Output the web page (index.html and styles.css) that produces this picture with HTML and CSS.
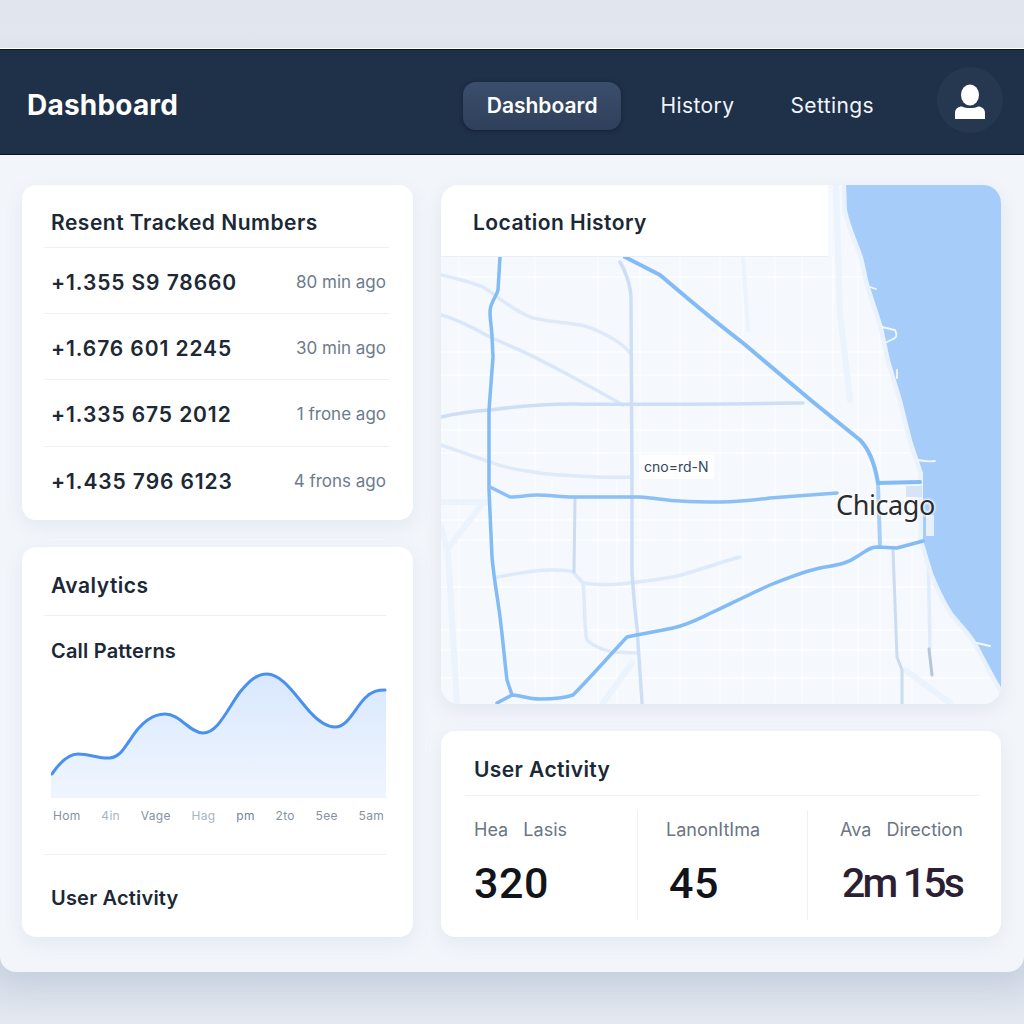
FILE: index.html
```html
<!DOCTYPE html>
<html lang="en">
<head>
    <meta charset="UTF-8">
    <meta name="viewport" content="width=device-width, initial-scale=1.0">
    <title>Dashboard</title>
    <link rel="stylesheet" href="styles.css">
</head>
<body>
    <div class="page">
        <header class="topbar">
            <div class="brand">Dashboard</div>
            <nav class="nav">
                <a class="nav-item active">Dashboard</a>
                <a class="nav-item">History</a>
                <a class="nav-item">Settings</a>
            </nav>
            <div class="avatar">
                <svg width="32" height="36" viewBox="0 0 32 36">
                    <ellipse cx="16" cy="11" rx="9" ry="10.5" fill="#fff"/>
                    <path d="M1 35v-6c0-4 3-6.500 7-6.500 2 1 5 1.500 8 1.500s6-.5 8-1.500c4 0 7 2.500 7 6.500v6z" fill="#fff"/>
                </svg>
            </div>
        </header>

        <main class="content">
            <div class="col-left">
                <section class="card numbers">
                    <h2 class="card-title">Resent Tracked Numbers</h2>
                    <div class="num-row"><span class="num">+1.355 S9 78660</span><span class="when">80 min ago</span></div>
                    <div class="num-row"><span class="num">+1.676 601 2245</span><span class="when">30 min ago</span></div>
                    <div class="num-row"><span class="num">+1.335 675 2012</span><span class="when">1 frone ago</span></div>
                    <div class="num-row"><span class="num">+1.435 796 6123</span><span class="when">4 frons ago</span></div>
                </section>

                <section class="card analytics">
                    <h2 class="card-title">Avalytics</h2>
                    <h3 class="sub-title">Call Patterns</h3>
                    <svg class="chart" width="336" height="132" viewBox="51 670 336 132">
                        <defs>
                            <linearGradient id="areaFill" x1="0" y1="0" x2="0" y2="1">
                                <stop offset="0" stop-color="#d9e8fe"/>
                                <stop offset="1" stop-color="#eff5fe"/>
                            </linearGradient>
                        </defs>
                        <path fill="url(#areaFill)" d="M51 774C60 762 68 754 78 754C90 754 100 759 110 758C120 757 124 748 130 740C140 724 152 714 165 714C180 714 190 733 203 733C218 733 228 708 240 692C250 680 257 674 267 674C282 674 295 695 310 712C320 723 327 727 335 727C348 727 355 708 365 698C372 691 378 690 386 690V798H51z"/>
                        <path fill="none" stroke="#4a90ee" stroke-width="3" stroke-linecap="round" d="M52 774C60 762 68 754 78 754C90 754 100 759 110 758C120 757 124 748 130 740C140 724 152 714 165 714C180 714 190 733 203 733C218 733 228 708 240 692C250 680 257 674 267 674C282 674 295 695 310 712C320 723 327 727 335 727C348 727 355 708 365 698C372 691 378 690 385 690"/>
                    </svg>
                    <div class="axis">
                        <span>Hom</span><span class="faint">4in</span><span>Vage</span><span class="faint">Hag</span><span class="dark">pm</span><span>2to</span><span>5ee</span><span>5am</span>
                    </div>
                    <div class="analytics-foot">User Activity</div>
                </section>
            </div>

            <div class="col-right">
                <section class="map-card">
                    <svg class="map" width="560" height="519" viewBox="441 185 560 519">
                        <rect x="441" y="185" width="560" height="519" fill="#f5f8fd"/>
                        <!-- street grid -->
                        <path fill="none" stroke="#fff" stroke-width="1.300" opacity="0.7" d="M459 257V703M535 257V703M552 480V703M598 257V703M617 480V703M640 257V703M680 257V703M720 257V703M743 257V703M775 257V703M802 257V703M833 257V703M858 257V703M880 257V703M912 540V703M441 277H870M441 352H890M441 375H895M441 430H905M441 453H910M441 520H920M441 540H925M441 587H935M441 630H965M441 650H975M441 678H995"/>
                        <!-- faint roads -->
                        <g fill="none" stroke-linecap="round" stroke-linejoin="round">
                            <path stroke="#ebf3fd" stroke-width="6" d="M836 185L840 313L850 400M905 670L950 703M632 663L603 703M441 502H487M483 503L448 548M441 527L448 553L457 703"/>
                            <path stroke="#ebf3fd" stroke-width="4" d="M743 257L748 330"/>
                            <path stroke="#deeafa" stroke-width="3.500" d="M441 275C460 279 470 282 483 287C500 298 515 312 533 318C550 322 565 322 580 325C595 328 620 340 630 353M441 445L490 462C505 468 520 470 533 472C550 475 600 478 632 477M497 577C515 574 535 570 550 570C560 570 570 570 573 572L583 583C595 585 610 585 620 584C640 582 655 580 673 577C695 572 720 562 740 557M583 583C585 600 584 630 587 640C595 648 605 650 613 652L638 653"/>
                            <path stroke="#d9e7f9" stroke-width="3.500" d="M441 315C460 320 475 329 490 337C505 344 522 350 540 360C570 375 600 392 623 405"/>
                            <path stroke="#cddff6" stroke-width="3.500" d="M441 417C458 413 475 411 490 410C520 406 550 404 573 404C640 405 720 404 803 403M620 262C625 270 631 285 631 300C632 360 632 480 632 573C634 600 636 620 637 627L642 703"/>
                            <path stroke="#ccdcf0" stroke-width="3" d="M575 497L574 572M893 550L897 657L902 670V703"/>
                            <path stroke="#dfecfb" stroke-width="3.500" d="M928 547L930 648"/>
                            <path stroke="#b3c6dc" stroke-width="3" d="M929 649L932 675"/>
                        </g>
                        <!-- lake -->
                        <path fill="#a6cdf9" stroke="#e9f2fd" stroke-width="9" paint-order="stroke" stroke-linejoin="round" d="M846 181L847 210C851 228 858 242 863 257C866 268 867 278 870 287L883 327L890 360L902 400L912 440L923 473V540L933 573C940 590 946 602 953 613C962 624 970 632 977 643C985 658 992 672 1004 692V181z"/>
                        <path fill="none" stroke="#f4f8fe" stroke-width="1.800" stroke-linecap="round" d="M882 327L895 330C897 334 897 336 895 338L887 342M897 370V378M918 460C923 461 930 462 935 461M977 643L990 646M870 287L876 289"/>
                        <!-- main roads -->
                        <g fill="none" stroke-linecap="round" stroke-linejoin="round">
                            <path stroke="#a9cff6" stroke-width="4" d="M878 484L880 545"/>
                            <path stroke="#82bbf6" stroke-width="3.500" d="M500 257L498 290C496 298 490 302 490 312C490 320 492 330 492 337L493 357L489 410V490L492 557C494 580 498 600 500 617C503 640 505 665 507 680L512 695"/>
                            <path stroke="#82bbf6" stroke-width="3.500" d="M497 703L512 695C520 695 528 699 540 699C552 699 565 698 573 695C590 678 610 655 627 637C640 634 655 632 673 628C690 624 700 618 713 612C730 604 750 594 770 585C790 577 805 571 820 568C835 565 845 565 858 556C866 551 870 547 877 547L897 548L923 541"/>
                            <path stroke="#82bbf6" stroke-width="4" d="M625 257L660 275C680 292 710 318 743 343L813 402L860 440C870 450 875 465 878 483L920 482"/>
                            <path stroke="#8cbff6" stroke-width="3.500" d="M490 487L510 497C520 497 528 495 537 495C550 495 560 497 573 497H640C655 498 668 501 680 501C695 502 710 502 720 502C740 502 755 500 770 498L837 493"/>
                        </g>
                        <path fill="#d6e4f5" d="M906 486H922V497H906z"/>
                        <path fill="#e8f1fb" d="M926 515H934V536H926z"/>
                    </svg>
                    <div class="map-head">Location History</div>
                    <div class="map-tag">cno=rd-N</div>
                    <div class="map-city">Chicago</div>
                </section>

                <section class="card activity">
                    <h2 class="activity-title">User Activity</h2>
                    <div class="stats">
                        <div class="stat">
                            <div class="stat-label">Hea&nbsp;&nbsp;&nbsp;Lasis</div>
                            <div class="stat-value">320</div>
                        </div>
                        <div class="stat">
                            <div class="stat-label">LanonItIma</div>
                            <div class="stat-value shifted">45</div>
                        </div>
                        <div class="stat">
                            <div class="stat-label">Ava&nbsp;&nbsp;&nbsp;Direction</div>
                            <div class="stat-value thin">2m 15s</div>
                        </div>
                    </div>
                </section>
            </div>
        </main>
    </div>
</body>
</html>
```

FILE: styles.css
```css
* {
    box-sizing: border-box;
}
html, body {
    height: 100%;
}
body {
    margin: 0;
    padding-top: 48px;
    overflow: hidden;
    font-family: Inter, "Liberation Sans", sans-serif;
    color: #1b2836;
    background: linear-gradient(#e1e5ee 0, #e1e6ef 48px, #d5dde9 972px, #e4e8f0 1024px);
}
.page {
    height: 924px;
    border-top: 1px solid #fff;
    border-radius: 0 0 16px 16px;
    background-color: #f2f5fa;
    box-shadow: 0 14px 30px rgba(120, 135, 160, 0.16);
}
.topbar {
    display: flex;
    align-items: center;
    height: 106px;
    padding: 0 21px 0 27px;
    border-top: 1px solid #0d1420;
    border-bottom: 1px solid #0d1420;
    background-color: #1f3049;
}
.brand {
    flex: 1;
    padding-top: 6px;
    font-size: 28px;
    font-weight: 700;
    letter-spacing: 0.2px;
    color: #fff;
}
.nav {
    display: flex;
    align-items: center;
    margin-right: 35px;
    padding-top: 8px;
}
.nav-item {
    padding: 0 28px 2px;
    font-size: 21px;
    letter-spacing: 0.4px;
    color: #f2f5fa;
}
.nav-item.active {
    display: flex;
    align-items: center;
    height: 48px;
    padding: 0 23px 2px 24px;
    margin-right: 12px;
    border-radius: 13px;
    font-weight: 600;
    letter-spacing: 0;
    color: #fff;
    background: linear-gradient(#3b4e6b, #2e405b);
    box-shadow: 0 1px 4px rgba(8, 16, 30, 0.5);
}
.avatar {
    display: flex;
    align-items: center;
    justify-content: center;
    width: 66px;
    height: 66px;
    margin-top: -4px;
    padding-top: 4px;
    border-radius: 50%;
    background-color: #26384f;
}
.content {
    display: flex;
    justify-content: space-between;
    padding: 30px 23px 0 22px;
}
.col-left {
    display: flex;
    flex-direction: column;
    gap: 27px;
    width: 391px;
}
.col-right {
    display: flex;
    flex-direction: column;
    gap: 27px;
    width: 560px;
}
.card {
    border-radius: 14px;
    background-color: #fff;
    box-shadow: 0 6px 18px rgba(130, 150, 180, 0.12);
}
.card-title {
    margin: 0;
    padding-left: 7px;
    font-size: 21px;
    font-weight: 600;
    letter-spacing: 0.5px;
    color: #1b2836;
}
.numbers {
    height: 335px;
    padding: 0 24px 0 22px;
}
.numbers .card-title {
    height: 63px;
    line-height: 76px;
    border-bottom: 1px solid #edf0f6;
}
.num-row {
    display: flex;
    align-items: center;
    justify-content: space-between;
    height: 66.200px;
    padding: 3px 3px 0 7px;
    border-bottom: 1px solid #edf0f6;
}
.num-row:last-child {
    border-bottom: none;
}
.num {
    font-size: 21px;
    font-weight: 600;
    letter-spacing: 0.9px;
    color: #1c2834;
}
.when {
    font-size: 17px;
    color: #6d7b8b;
}
.analytics {
    height: 390px;
    padding: 0 27px 0 22px;
}
.analytics .card-title {
    height: 69px;
    line-height: 77px;
    border-bottom: 1px solid #edf0f6;
}
.sub-title {
    margin: 22px 0 0 7px;
    font-size: 20px;
    line-height: 26px;
    font-weight: 600;
    letter-spacing: 0.2px;
    color: #1b2836;
}
.chart {
    display: block;
    margin: 6px 0 0 7px;
}
.axis {
    display: flex;
    justify-content: space-between;
    margin: 5px 2px 0 9px;
    font-size: 12px;
    line-height: 18px;
    letter-spacing: 0.3px;
    color: #8592a3;
}
.axis .faint {
    color: #a9b4c3;
}
.axis .dark {
    color: #75859a;
}
.analytics-foot {
    height: 56px;
    margin-top: 29px;
    padding-left: 7px;
    border-top: 1px solid #edf0f6;
    font-size: 20px;
    line-height: 86px;
    font-weight: 600;
    letter-spacing: 0.2px;
}
.map-card {
    position: relative;
    height: 519px;
    border-radius: 18px;
    overflow: hidden;
    box-shadow: 0 6px 18px rgba(130, 150, 180, 0.14);
}
.map {
    display: block;
    filter: blur(0.4px);
}
.map-head {
    position: absolute;
    top: 0;
    left: 0;
    width: 387px;
    height: 72px;
    padding-left: 32px;
    border-bottom: 1px solid #eaeff7;
    font-size: 21px;
    line-height: 76px;
    font-weight: 600;
    letter-spacing: 0.45px;
    background-color: #fff;
}
.map-tag {
    position: absolute;
    top: 270px;
    left: 198px;
    padding: 0 5px;
    font-size: 14px;
    line-height: 24px;
    color: #33465a;
    background-color: rgba(255, 255, 255, 0.85);
}
.map-city {
    position: absolute;
    top: 300px;
    left: 395px;
    font-family: "Noto Sans", sans-serif;
    font-size: 27px;
    line-height: 40px;
    letter-spacing: -0.4px;
    color: #2b2b2f;
    text-shadow: 0 0 3px #fff, 0 0 3px #fff, 0 0 3px #fff;
}
.activity {
    height: 206px;
    padding: 0 21px 0 24px;
}
.activity-title {
    height: 65px;
    margin: 0;
    padding-left: 9px;
    border-bottom: 1px solid #edf0f6;
    font-size: 21px;
    line-height: 78px;
    font-weight: 600;
    letter-spacing: 0.4px;
}
.stats {
    display: grid;
    grid-template-columns: 172px 170px 1fr;
    margin-top: 14px;
}
.stat {
    height: 110px;
    padding-left: 28px;
    border-left: 1px solid #eef1f6;
}
.stat:first-child {
    padding-left: 9px;
    border-left: none;
}
.stat:last-child {
    padding-left: 32px;
}
.stat-label {
    font-size: 18px;
    line-height: 40px;
    color: #6a7684;
}
.stat-value {
    margin-top: 8px;
    font-family: Roboto, "Liberation Sans", sans-serif;
    font-size: 43px;
    line-height: 50px;
    font-weight: 500;
    letter-spacing: 0.6px;
    white-space: nowrap;
    color: #111418;
}
.stat-value.shifted {
    margin-left: 3px;
}
.stat-value.thin {
    margin-left: 2px;
    font-size: 41px;
    letter-spacing: -2.8px;
    color: #2d1f33;
}
```
